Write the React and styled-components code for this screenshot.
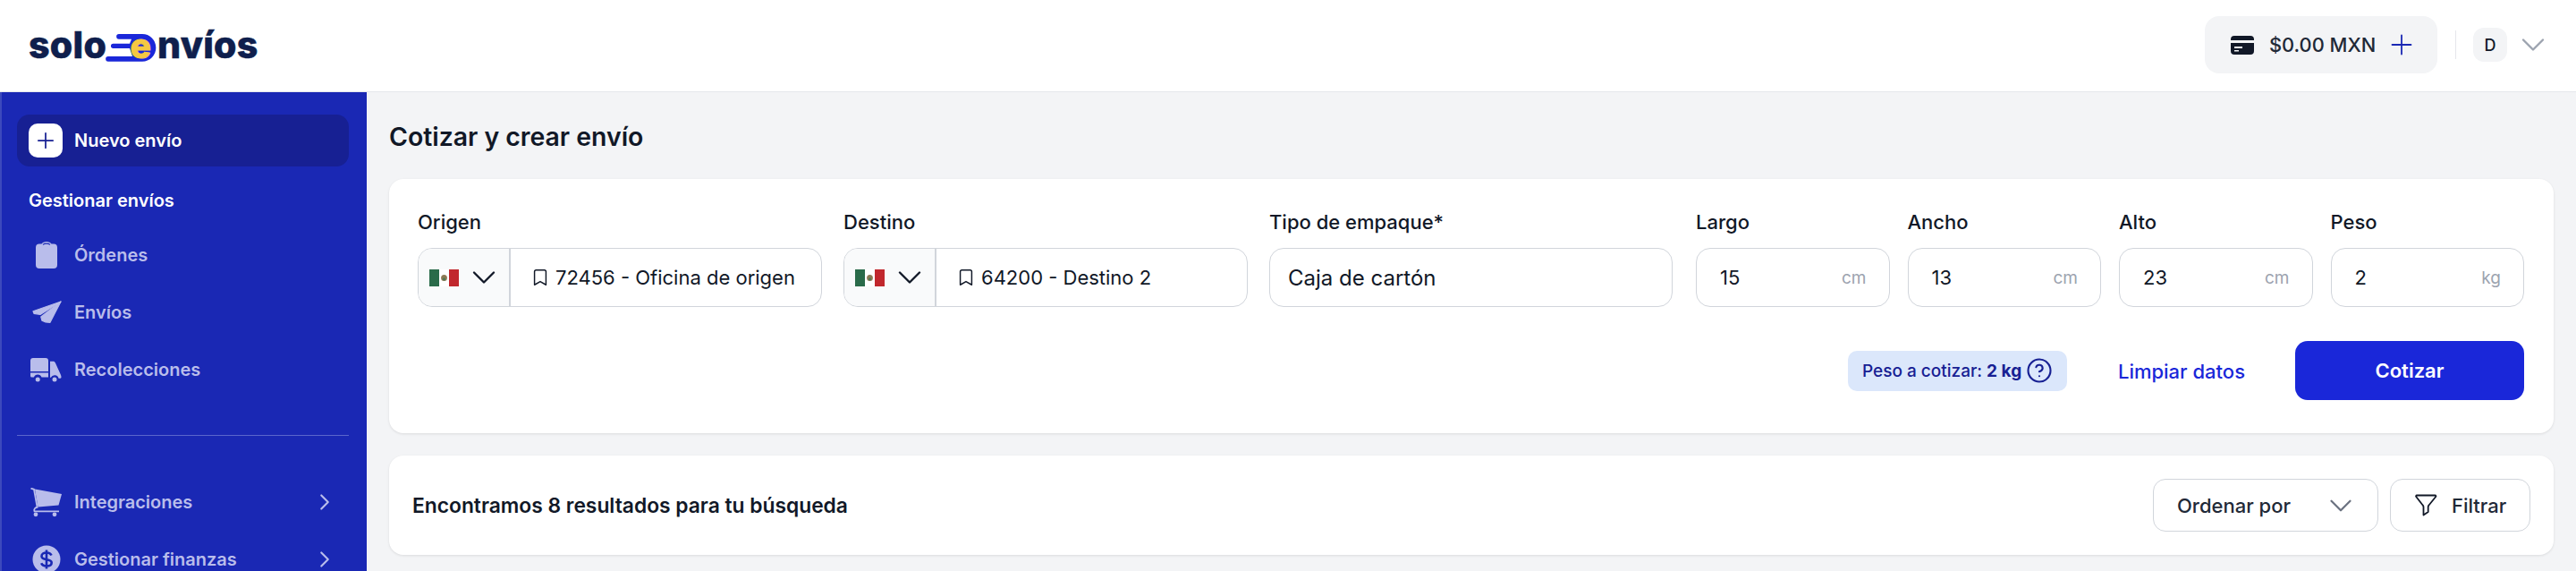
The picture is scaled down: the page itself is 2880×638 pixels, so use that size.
import styled, { createGlobalStyle } from 'styled-components';
import { ChevronDown, ChevronRight, Plus, Bookmark, CircleHelp } from 'lucide-react';

const GlobalStyle = createGlobalStyle`
  html, body {
    margin: 0;
    height: 638px;
    overflow: hidden;
    background: #f3f4f6;
    font-family: Inter, "Liberation Sans", sans-serif;
    color: #111827;
  }
  * { box-sizing: border-box; }
`;

const Page = styled.div`
  width: 2880px;
  height: 638px;
  display: flex;
  flex-direction: column;
  overflow: hidden;
`;

const Header = styled.header`
  flex: 0 0 103px;
  display: flex;
  align-items: center;
  justify-content: space-between;
  padding: 0 26px 2px 32px;
  background: #fff;
  border-bottom: 1px solid #e5e7eb;
`;

const Logo = styled.div`
  display: flex;
  align-items: center;
  height: 38px;
  font-size: 41px;
  font-weight: 800;
  letter-spacing: 0.3px;
  color: #0f1f4d;
  -webkit-text-stroke: 0.6px #0f1f4d;
`;

const LogoMark = styled.span`
  position: relative;
  display: block;
  flex: none;
  width: 58px;
  height: 33px;
  margin: 7px 0 0 -1px;
  svg { display: block; }
`;

const LogoE = styled.span`
  position: absolute;
  left: 27px;
  top: 2px;
  width: 24px;
  height: 24px;
  color: #f5c842;
  font-size: 39px;
  line-height: 24px;
  letter-spacing: 0;
  text-align: center;
  -webkit-text-stroke: 1px #f5c842;
`;

const HeaderRight = styled.div`
  display: flex;
  align-items: center;
`;

const Wallet = styled.div`
  display: flex;
  align-items: center;
  width: 260px;
  height: 64px;
  padding-left: 29px;
  border-radius: 16px;
  background: #f3f4f6;
  font-size: 21.8px;
  font-weight: 500;
  color: #1f2937;
  svg { flex: none; }
`;

const WalletAmount = styled.span`
  margin: 0 11px 0 17px;
  white-space: nowrap;
`;

const HeaderDivider = styled.div`
  width: 1px;
  height: 32px;
  margin: 0 19px 0 20px;
  background: #e5e7eb;
`;

const Avatar = styled.div`
  display: flex;
  align-items: center;
  justify-content: center;
  width: 38px;
  height: 38px;
  margin-right: 7px;
  border-radius: 12px;
  background: #f3f4f6;
  font-size: 18px;
  font-weight: 500;
`;

const Body = styled.div`
  flex: 1;
  display: flex;
  min-height: 0;
`;

const Sidebar = styled.aside`
  flex: 0 0 410px;
  padding: 25px 20px 0 19px;
  background: #1a28b4;
  border-left: 2px solid #3c49bd;
  overflow: hidden;
`;

const NewButton = styled.div`
  display: flex;
  align-items: center;
  gap: 13px;
  height: 58px;
  margin-left: -2px;
  padding-left: 13px;
  border-radius: 14px;
  background: #172093;
  color: #fff;
  font-size: 20px;
  font-weight: 600;
`;

const NewIcon = styled.span`
  display: flex;
  align-items: center;
  justify-content: center;
  width: 38px;
  height: 38px;
  border-radius: 10px;
  background: #fff;
  color: #172093;
`;

const SectionTitle = styled.div`
  margin: 26px 0 17px 11px;
  color: #fff;
  font-size: 20px;
  line-height: 24px;
  font-weight: 600;
`;

const NavItem = styled.div`
  display: flex;
  align-items: center;
  height: 64px;
  margin-left: 11px;
  color: #b9bdeb;
  font-size: 20px;
  font-weight: 600;
`;

const NavIcon = styled.span`
  display: flex;
  justify-content: center;
  flex: 0 0 40px;
  margin-right: 11px;
`;

const NavLabel = styled.span`
  flex: 1;
`;

const NavArrow = styled.span`
  display: flex;
  margin-right: 12px;
`;

const SideDivider = styled.div`
  height: 1px;
  margin: 41px 0 42px -2px;
  background: #5b66cc;
`;

const Main = styled.main`
  flex: 1;
  min-width: 0;
  padding: 33px 25px 0;
`;

const Title = styled.h1`
  margin: 0 0 30px;
  font-size: 28.4px;
  line-height: 34px;
  font-weight: 600;
  color: #111827;
`;

const Card = styled.section`
  background: #fff;
  border-radius: 16px;
  box-shadow: 0 1px 3px rgba(0, 0, 0, 0.1);
`;

const FormCard = styled(Card)`
  height: 284px;
  padding: 34px 33px 0 32px;
`;

const FieldRow = styled.div`
  display: flex;
  gap: 24px;
`;

const Field = styled.div`
  flex: ${(p) => (p.$width ? `0 0 ${p.$width}px` : '1 1 0')};
`;

const MeasureGroup = styled.div`
  flex: 1;
  display: flex;
  gap: 20px;
  margin-left: 2px;
`;

const FieldLabel = styled.div`
  margin-bottom: 15px;
  font-size: 22px;
  line-height: 28px;
  font-weight: 500;
  color: #111827;
`;

const InputBox = styled.div`
  display: flex;
  align-items: center;
  height: 66px;
  border: 1px solid #d1d5db;
  border-radius: 16px;
  overflow: hidden;
  font-size: ${(p) => p.$size || 22}px;
  color: #111827;
`;

const CountryPicker = styled.div`
  flex: 0 0 103px;
  display: flex;
  align-items: center;
  justify-content: space-between;
  height: 100%;
  padding: 0 6px 0 12px;
  background: #f9fafb;
  border-right: 2px solid #d1d5db;
`;

const PlaceText = styled.span`
  display: flex;
  align-items: center;
  gap: 6px;
  padding-left: 22px;
  white-space: nowrap;
`;

const PlainText = styled.span`
  padding-left: 20px;
`;

const MeasureValue = styled.span`
  flex: 1;
  padding-left: 26px;
`;

const Unit = styled.span`
  padding-right: 25px;
  color: #9ca3af;
  font-size: 19px;
`;

const ActionRow = styled.div`
  display: flex;
  align-items: center;
  justify-content: flex-end;
  margin-top: 38px;
`;

const WeightBadge = styled.div`
  display: flex;
  align-items: center;
  gap: 5px;
  width: 245px;
  height: 45px;
  padding-left: 16px;
  border-radius: 10px;
  background: #dbe7fb;
  color: #172093;
  font-size: 19px;
  font-weight: 500;
  white-space: nowrap;
  b { font-weight: 700; }
`;

const ClearLink = styled.span`
  margin: 2px 56px 0 57px;
  color: #1a27d9;
  font-size: 22px;
  font-weight: 500;
`;

const PrimaryButton = styled.button`
  width: 256px;
  height: 66px;
  border: 0;
  border-radius: 14px;
  background: #1a27d9;
  color: #fff;
  font: 600 22px Inter, sans-serif;
`;

const ResultsCard = styled(Card)`
  display: flex;
  align-items: center;
  height: 111px;
  margin-top: 25px;
  padding: 0 26px;
`;

const ResultsText = styled.div`
  flex: 1;
  font-size: 22.8px;
  font-weight: 600;
  color: #111827;
`;

const OutlineBox = styled.div`
  display: flex;
  align-items: center;
  height: 59px;
  border: 1px solid #d1d5db;
  border-radius: 14px;
  font-size: 22px;
  font-weight: 500;
  color: #1f2937;
`;

const SortBox = styled(OutlineBox)`
  justify-content: space-between;
  width: 252px;
  padding: 0 20px 0 26px;
  margin-right: 13px;
`;

const FilterBox = styled(OutlineBox)`
  gap: 16px;
  width: 157px;
  padding-left: 27px;
`;

const MexicoFlag = () => (
  <svg width="33" height="19" viewBox="0 0 33 19">
    <rect width="11" height="19" fill="#2a6b4a" />
    <rect x="11" width="11" height="19" fill="#fff" />
    <rect x="22" width="11" height="19" fill="#c1272d" />
    <ellipse cx="16.5" cy="9.5" rx="3.4" ry="3.6" fill="#8c7a55" />
    <circle cx="16.5" cy="11" r="1.4" fill="#4a7a55" />
  </svg>
);

const CardIcon = () => (
  <svg width="26" height="21" viewBox="0 0 26 21">
    <path
      fill="#111827"
      d="M4 0h18a4 4 0 0 1 4 4v1H0V4a4 4 0 0 1 4-4zM0 8h26v9a4 4 0 0 1-4 4H4a4 4 0 0 1-4-4zm4 4v2h9v-2zm0 4v1.6h5V16z"
    />
  </svg>
);

const ClipboardIcon = () => (
  <svg width="24" height="30" viewBox="0 0 24 30">
    <path
      fill="currentColor"
      d="M6.500 2.500C7.500 1 9.500 0 12 0s4.500 1 5.500 2.500H20a4 4 0 0 1 4 4V26a4 4 0 0 1-4 4H4a4 4 0 0 1-4-4V6.500a4 4 0 0 1 4-4z"
    />
    <path fill="none" stroke="#1a28b4" strokeWidth="1.2" d="M8 3.400c1-.9 2.400-1.300 4-1.300s3 .4 4 1.300" />
  </svg>
);

const PlaneIcon = () => (
  <svg width="33" height="26" viewBox="0 0 33 26" fill="currentColor" stroke="currentColor" strokeWidth="1.2" strokeLinejoin="round">
    <path d="M1 11.700 32 1 9 15.500 2 14.300z" />
    <path d="M32 1 20 24.300 15 24l-4-1.700-1.200-4.200z" />
  </svg>
);

const TruckIcon = () => (
  <svg width="36" height="28" viewBox="0 0 36 28" fill="currentColor">
    <path d="M3 1h14a3 3 0 0 1 3 3v12H0V4a3 3 0 0 1 3-3z" />
    <path d="M0 17.500h20v5h-7.500a4.600 4.600 0 0 0-8.600 0H1.500A1.500 1.500 0 0 1 0 21z" />
    <path d="M22 4.700h3.500c1 0 1.900.6 2.300 1.500l6 13.300c.5 1 .7 2 .7 3 0 .7-.4 1.200-1 1.200h-2a4.600 4.600 0 0 0-8.600-1H22z" />
    <circle cx="8.200" cy="25" r="2.500" />
    <circle cx="27" cy="25" r="2.500" />
  </svg>
);

const CartIcon = () => (
  <svg width="36" height="33" viewBox="0 0 36 33">
    <path fill="currentColor" d="M5 1.500 35 7l-3.500 12.500-23 2z" />
    <path fill="none" stroke="currentColor" strokeWidth="1.8" d="M.5.600 4 1.800 7.500 21" />
    <path fill="none" stroke="currentColor" strokeWidth="1.8" d="M8.500 21.500C5 22 3.500 24 4.500 26.300H32" />
    <circle cx="6" cy="29.800" r="2.400" fill="currentColor" />
    <circle cx="27" cy="29.800" r="2.400" fill="currentColor" />
  </svg>
);

const DollarIcon = () => (
  <svg width="32" height="32" viewBox="0 0 32 32">
    <circle cx="16" cy="16" r="15.500" fill="currentColor" />
    <path
      fill="none"
      stroke="#1a28b4"
      strokeWidth="2.600"
      d="M16 5.500v21M21.500 11.500c-.8-2-2.800-3-5.500-3-3.200 0-5.500 1.500-5.500 3.900 0 5.400 11.200 2.400 11.200 7.300 0 2.400-2.500 3.800-5.700 3.800-2.900 0-5-1.100-5.800-3.200"
    />
  </svg>
);

const FunnelIcon = () => (
  <svg width="25" height="25" viewBox="0 0 25 25">
    <path
      fill="none"
      stroke="#111827"
      strokeWidth="1.8"
      strokeLinejoin="round"
      d="M2 1.500h20.500c.8 0 1.200.9.700 1.500L15.500 12.500c-.5.5-.8 1.200-.8 2v5.500L9.500 23.500V14.500c0-.8-.3-1.500-.8-2L1.300 3c-.5-.6-.1-1.500.7-1.500z"
    />
  </svg>
);

const Chevron = ({ color, size = 44, stroke = 1.3 }) => (
  <ChevronDown size={size} color={color} strokeWidth={stroke} />
);

const measures = [
  { label: 'Largo', value: '15', unit: 'cm' },
  { label: 'Ancho', value: '13', unit: 'cm' },
  { label: 'Alto', value: '23', unit: 'cm' },
  { label: 'Peso', value: '2', unit: 'kg' },
];

function PlaceField({ label, value }) {
  return (
    <Field $width={452}>
      <FieldLabel>{label}</FieldLabel>
      <InputBox>
        <CountryPicker>
          <MexicoFlag />
          <Chevron color="#111827" />
        </CountryPicker>
        <PlaceText>
          <Bookmark size={22} strokeWidth={1.6} />
          {value}
        </PlaceText>
      </InputBox>
    </Field>
  );
}

export default function App() {
  return (
    <Page>
      <GlobalStyle />
      <Header>
        <Logo>
          solo
          <LogoMark>
            <svg width="58" height="33" viewBox="0 0 58 33">
              <path
                fill="#1a27d9"
                d="M15 1H41a15.350 15.350 0 0 1 0 30.700H3A2.850 2.850 0 0 1 3 26H30L27 17H8.600A2.650 2.650 0 0 1 8.600 11.700H27L29 6.700H15A2.850 2.850 0 0 1 15 1Z"
              />
            </svg>
            <LogoE>e</LogoE>
          </LogoMark>
          nvíos
        </Logo>
        <HeaderRight>
          <Wallet>
            <CardIcon />
            <WalletAmount>$0.00 MXN</WalletAmount>
            <Plus size={36} color="#1a28b4" strokeWidth={1.2} />
          </Wallet>
          <HeaderDivider />
          <Avatar>D</Avatar>
          <Chevron color="#9ca3af" />
        </HeaderRight>
      </Header>
      <Body>
        <Sidebar>
          <NewButton>
            <NewIcon>
              <Plus size={28} strokeWidth={1.5} />
            </NewIcon>
            Nuevo envío
          </NewButton>
          <SectionTitle>Gestionar envíos</SectionTitle>
          <NavItem>
            <NavIcon><ClipboardIcon /></NavIcon>
            <NavLabel>Órdenes</NavLabel>
          </NavItem>
          <NavItem>
            <NavIcon><PlaneIcon /></NavIcon>
            <NavLabel>Envíos</NavLabel>
          </NavItem>
          <NavItem>
            <NavIcon><TruckIcon /></NavIcon>
            <NavLabel>Recolecciones</NavLabel>
          </NavItem>
          <SideDivider />
          <NavItem>
            <NavIcon><CartIcon /></NavIcon>
            <NavLabel>Integraciones</NavLabel>
            <NavArrow><ChevronRight size={30} strokeWidth={1.7} /></NavArrow>
          </NavItem>
          <NavItem>
            <NavIcon><DollarIcon /></NavIcon>
            <NavLabel>Gestionar finanzas</NavLabel>
            <NavArrow><ChevronRight size={30} strokeWidth={1.7} /></NavArrow>
          </NavItem>
        </Sidebar>
        <Main>
          <Title>Cotizar y crear envío</Title>
          <FormCard>
            <FieldRow>
              <PlaceField label="Origen" value="72456 - Oficina de origen" />
              <PlaceField label="Destino" value="64200 - Destino 2" />
              <Field $width={451}>
                <FieldLabel>Tipo de empaque*</FieldLabel>
                <InputBox $size={24}>
                  <PlainText>Caja de cartón</PlainText>
                </InputBox>
              </Field>
              <MeasureGroup>
                {measures.map((m) => (
                  <Field key={m.label}>
                    <FieldLabel>{m.label}</FieldLabel>
                    <InputBox>
                      <MeasureValue>{m.value}</MeasureValue>
                      <Unit>{m.unit}</Unit>
                    </InputBox>
                  </Field>
                ))}
              </MeasureGroup>
            </FieldRow>
            <ActionRow>
              <WeightBadge>
                <span>Peso a cotizar: <b>2 kg</b></span>
                <CircleHelp size={30} strokeWidth={1.7} />
              </WeightBadge>
              <ClearLink>Limpiar datos</ClearLink>
              <PrimaryButton>Cotizar</PrimaryButton>
            </ActionRow>
          </FormCard>
          <ResultsCard>
            <ResultsText>Encontramos 8 resultados para tu búsqueda</ResultsText>
            <SortBox>
              Ordenar por
              <Chevron color="#6b7280" size={42} />
            </SortBox>
            <FilterBox>
              <FunnelIcon />
              Filtrar
            </FilterBox>
          </ResultsCard>
        </Main>
      </Body>
    </Page>
  );
}
